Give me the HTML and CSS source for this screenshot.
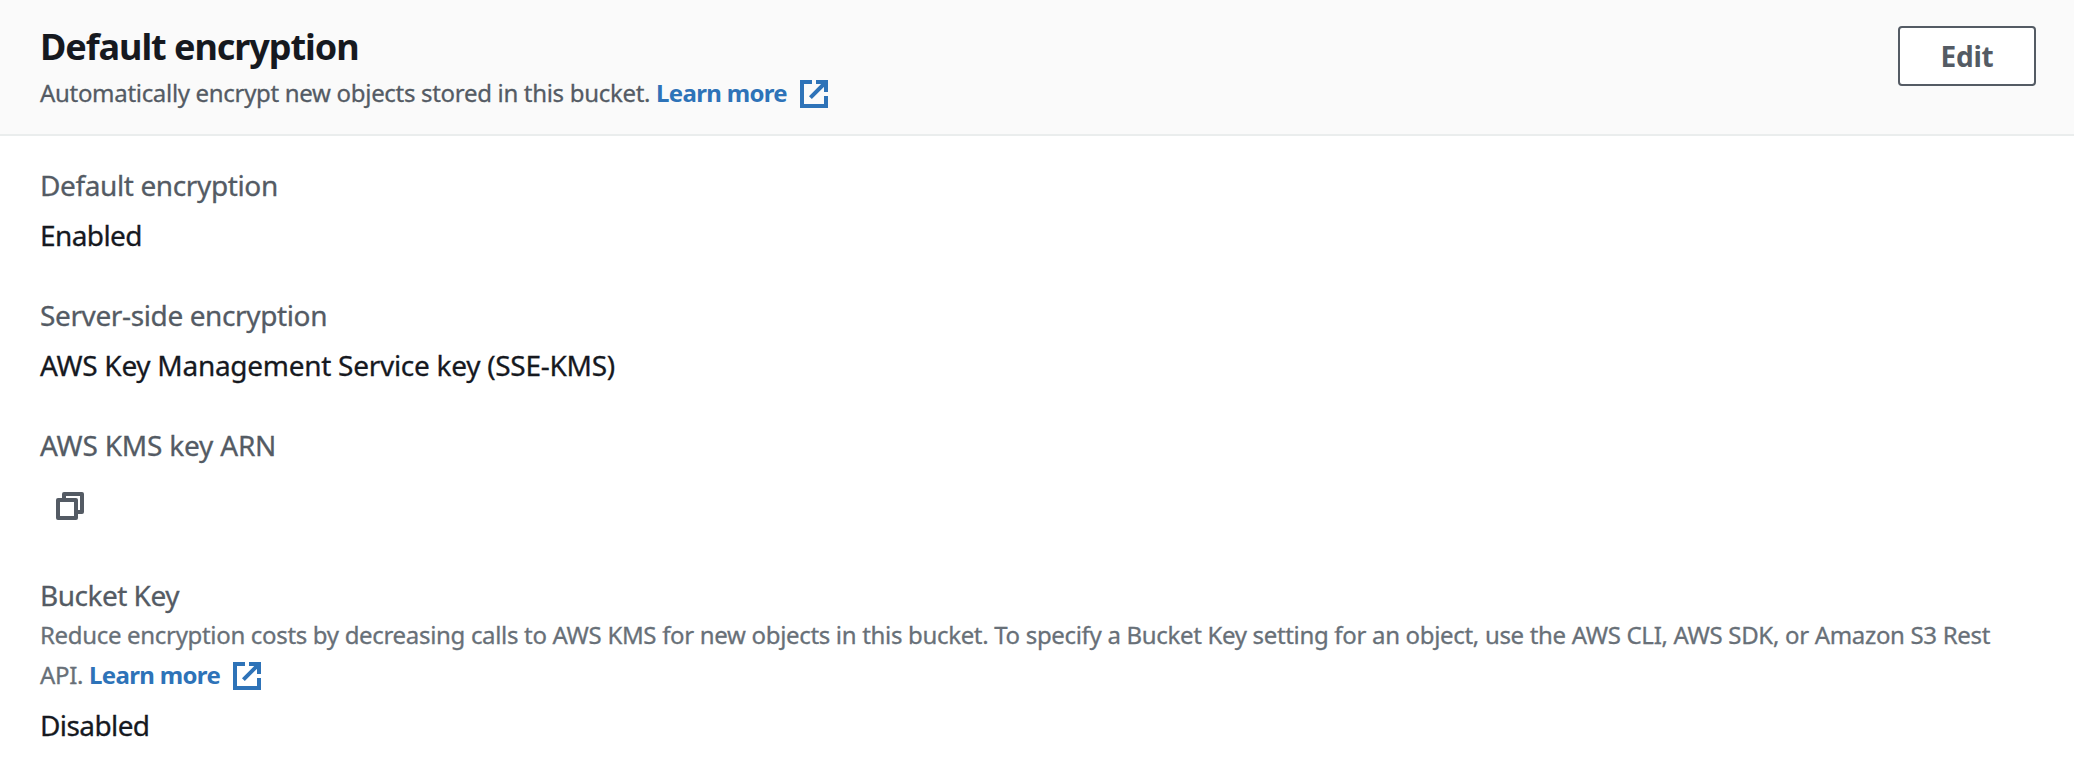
FILE: index.html
```html
<!DOCTYPE html>
<html lang="en">
<head>
<meta charset="utf-8">
<title>Default encryption</title>
<link rel="stylesheet" href="styles.css">
</head>
<body>
<section class="panel">
  <header class="panel-header">
    <div class="panel-intro">
      <h2 class="panel-title">Default encryption</h2>
      <p class="panel-subtitle">Automatically encrypt new objects stored in this bucket. <a class="link">Learn more<svg class="icon-external" viewBox="0 0 28 28"><path d="M12 2H2V26H26V16M16 2H26V12M10.4 17.6L25 3"/></svg></a></p>
    </div>
    <button class="edit-button" type="button">Edit</button>
  </header>
  <dl class="fields">
    <div class="field">
      <dt class="label">Default encryption</dt>
      <dd class="value value-status">Enabled</dd>
    </div>
    <div class="field">
      <dt class="label">Server-side encryption</dt>
      <dd class="value">AWS Key Management Service key (SSE-KMS)</dd>
    </div>
    <div class="field">
      <dt class="label label-arn">AWS KMS key ARN</dt>
      <dd class="value value-copy"><svg class="icon-copy" viewBox="0 0 28 28"><path d="M8 7V2H26V20H21M2 8H20V26H2Z"/></svg></dd>
    </div>
    <div class="field">
      <dt class="label label-bucket">Bucket Key
        <p class="description">Reduce encryption costs by decreasing calls to AWS KMS for new objects in this bucket. To specify a Bucket Key setting for an object, use the AWS CLI, AWS SDK, or Amazon S3 Rest API. <a class="link">Learn more<svg class="icon-external" viewBox="0 0 28 28"><path d="M12 2H2V26H26V16M16 2H26V12M10.4 17.6L25 3"/></svg></a></p>
      </dt>
      <dd class="value value-status">Disabled</dd>
    </div>
  </dl>
</section>
</body>
</html>
```
FILE: styles.css
```css
* {
  box-sizing: border-box;
  margin: 0;
}

body {
  background: #fff;
  color: #16191f;
  font-family: "Noto Sans", "Open Sans", sans-serif;
  font-size: 28px;
  line-height: 40px;
}

.panel-header {
  display: flex;
  justify-content: space-between;
  align-items: flex-start;
  height: 136px;
  padding: 25px 38px 0 40px;
  background: #fafafa;
  border-bottom: 2px solid #eaeded;
}

.panel-title {
  font-size: 36px;
  line-height: 44px;
  font-weight: 700;
  letter-spacing: -1.06px;
}

.panel-subtitle {
  margin-top: 6px;
  color: #545b64;
  font-size: 24px;
  line-height: 36px;
  letter-spacing: -0.31px;
  -webkit-text-stroke: 0.3px;
}

.link {
  color: #2e73b8;
  font-weight: 700;
  letter-spacing: -0.67px;
  white-space: nowrap;
  -webkit-text-stroke: 0;
}

.icon-external,
.icon-copy {
  width: 28px;
  height: 28px;
  fill: none;
  stroke: currentColor;
  stroke-width: 4;
}

.icon-external {
  margin: -10px 0 -6px 13px;
  vertical-align: 0;
}

.edit-button {
  width: 138px;
  height: 60px;
  margin-top: 1px;
  border: 2px solid #545b64;
  border-radius: 4px;
  background: #fff;
  color: #545b64;
  font: 700 28px/40px "Noto Sans", "Open Sans", sans-serif;
  letter-spacing: -0.2px;
}

.fields {
  display: flex;
  flex-direction: column;
  gap: 40px;
  padding: 29px 40px 0;
}

.field {
  display: flex;
  flex-direction: column;
  gap: 10px;
}

.label {
  color: #545b64;
  letter-spacing: -0.38px;
  -webkit-text-stroke: 0.3px;
}

.label-arn {
  letter-spacing: -0.2px;
}

.label-bucket {
  letter-spacing: -0.5px;
}

.value {
  letter-spacing: -0.28px;
  -webkit-text-stroke: 0.3px;
}

.value-status {
  letter-spacing: -0.6px;
}

.value-copy {
  display: flex;
  height: 60px;
  padding: 17px 16px 0;
  color: #545b64;
}

.icon-copy {
  stroke-linejoin: round;
}

.description {
  color: #687078;
  font-size: 24px;
  letter-spacing: -0.32px;
}
```
